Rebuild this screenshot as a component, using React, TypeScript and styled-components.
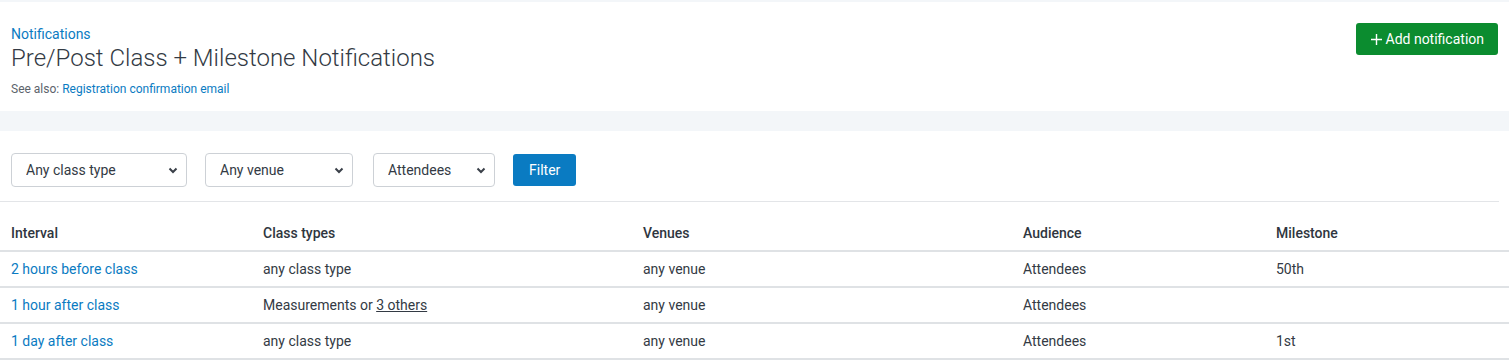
import styled, { createGlobalStyle } from 'styled-components';

const GlobalStyle = createGlobalStyle`
	body {
		margin: 0;
		font-family: Roboto, "Liberation Sans", Arial, sans-serif;
		background: #ffffff;
		color: #333a44;
	}
	* { box-sizing: border-box; }
`

const TopStrip = styled.div`
	height: 2px;
	background-color: #f3f6f9;
`

const Header = styled.header`
	display: flex;
	justify-content: space-between;
	align-items: flex-start;
	padding: 23px 11px 0 11px;
	height: 109px;
	background: #fff;
`

const HeaderText = styled.div`
	display: flex;
	flex-direction: column;
`

const Crumb = styled.a`
	color: #0a7bc2;
	font-size: 14px;
	line-height: 18px;
	text-decoration: none;
`

const Title = styled.h1`
	margin: 0;
	font-size: 24px;
	font-weight: 300;
	line-height: 30px;
	color: #333a44;
`

const SeeAlso = styled.p`
	margin: 8px 0 0 0;
	font-size: 12px;
	line-height: 16px;
	color: #5c636b;
	a {
		color: #0a7bc2;
		text-decoration: none;
	}
`

const AddButton = styled.button`
	display: flex;
	align-items: center;
	gap: 4px;
	height: 32px;
	padding: 0 14px 0 15px;
	margin-top: -2px;
	border: none;
	border-radius: 3px;
	background-color: #0b8c2f;
	color: #fff;
	font-family: inherit;
	font-size: 14px;
	cursor: pointer;
	svg {
		margin-top: 1px;
	}
`

const Band = styled.div`
	height: 20px;
	background-color: #f3f6f9;
`

const Content = styled.main`
	padding-top: 22px;
`

const Filters = styled.div`
	display: flex;
	align-items: center;
	padding: 0 10px 14px 11px;
	margin: 0 10px 0 0;
	border-bottom: 1px solid #e3e5e8;
`

const SelectWrap = styled.div<{ w: number; gap: number }>`
	position: relative;
	width: ${p => p.w}px;
	margin-right: ${p => p.gap}px;
	svg {
		position: absolute;
		right: 9px;
		top: 14px;
		pointer-events: none;
	}
`

const Select = styled.select`
	appearance: none;
	width: 100%;
	height: 34px;
	padding: 0 24px 0 14px;
	border: 1px solid #cdd1d6;
	border-radius: 4px;
	background: #fff;
	font-family: inherit;
	font-size: 14px;
	color: #333a44;
`

const FilterButton = styled.button`
	height: 32px;
	padding: 0 16px;
	border: none;
	border-radius: 3px;
	background-color: #0a7bc2;
	color: #fff;
	font-family: inherit;
	font-size: 14px;
	cursor: pointer;
`

const Table = styled.table`
	width: 100%;
	margin-top: 13px;
	border-collapse: collapse;
	table-layout: fixed;
	font-size: 14px;
`

const Th = styled.th`
	height: 36px;
	padding: 0 11px;
	text-align: left;
	font-weight: 500;
	color: #2f3640;
	border-bottom: 2px solid #dfe2e5;
`

const Td = styled.td`
	height: 36px;
	padding: 0 11px;
	color: #333a44;
	border-bottom: 2px solid #dfe2e5;
`

const RowLink = styled.a`
	color: #0a7bc2;
	text-decoration: none;
`

const Others = styled.a`
	color: #333a44;
	text-decoration: underline;
`

const Chevron = () => (
	<svg width="10" height="7" viewBox="0 0 10 7">
		<path d="M1.5 1.5 L5 5 L8.5 1.5" fill="none" stroke="#3a4049" strokeWidth="2" />
	</svg>
)

const filters = [
	{ label: 'Any class type', w: 176, gap: 18 },
	{ label: 'Any venue', w: 148, gap: 20 },
	{ label: 'Attendees', w: 122, gap: 18 },
]

const rows = [
	{ interval: '2 hours before class', types: 'any class type', venues: 'any venue', audience: 'Attendees', milestone: '50th' },
	{ interval: '1 hour after class', types: null, venues: 'any venue', audience: 'Attendees', milestone: '' },
	{ interval: '1 day after class', types: 'any class type', venues: 'any venue', audience: 'Attendees', milestone: '1st' },
]

function App() {
	return (
		<>
			<GlobalStyle />
			<TopStrip />
			<Header>
				<HeaderText>
					<Crumb href="#">Notifications</Crumb>
					<Title>Pre/Post Class + Milestone Notifications</Title>
					<SeeAlso>See also: <a href="#">Registration confirmation email</a></SeeAlso>
				</HeaderText>
				<AddButton>
					<svg width="11" height="11" viewBox="0 0 11 11">
						<path d="M5.5 0 V11 M0 5.5 H11" stroke="#fff" strokeWidth="1.4" />
					</svg>
					Add notification
				</AddButton>
			</Header>
			<Band />
			<Content>
				<Filters>
					{filters.map(f => (
						<SelectWrap key={f.label} w={f.w} gap={f.gap}>
							<Select defaultValue={f.label}>
								<option>{f.label}</option>
							</Select>
							<Chevron />
						</SelectWrap>
					))}
					<FilterButton>Filter</FilterButton>
				</Filters>
				<Table>
					<colgroup>
						<col style={{ width: 252 }} />
						<col style={{ width: 380 }} />
						<col style={{ width: 380 }} />
						<col style={{ width: 253 }} />
						<col />
					</colgroup>
					<thead>
						<tr>
							<Th>Interval</Th>
							<Th>Class types</Th>
							<Th>Venues</Th>
							<Th>Audience</Th>
							<Th>Milestone</Th>
						</tr>
					</thead>
					<tbody>
						{rows.map(r => (
							<tr key={r.interval}>
								<Td><RowLink href="#">{r.interval}</RowLink></Td>
								<Td>{r.types ?? <>Measurements or <Others href="#">3 others</Others></>}</Td>
								<Td>{r.venues}</Td>
								<Td>{r.audience}</Td>
								<Td>{r.milestone}</Td>
							</tr>
						))}
					</tbody>
				</Table>
			</Content>
		</>
	)
}

export default App;
